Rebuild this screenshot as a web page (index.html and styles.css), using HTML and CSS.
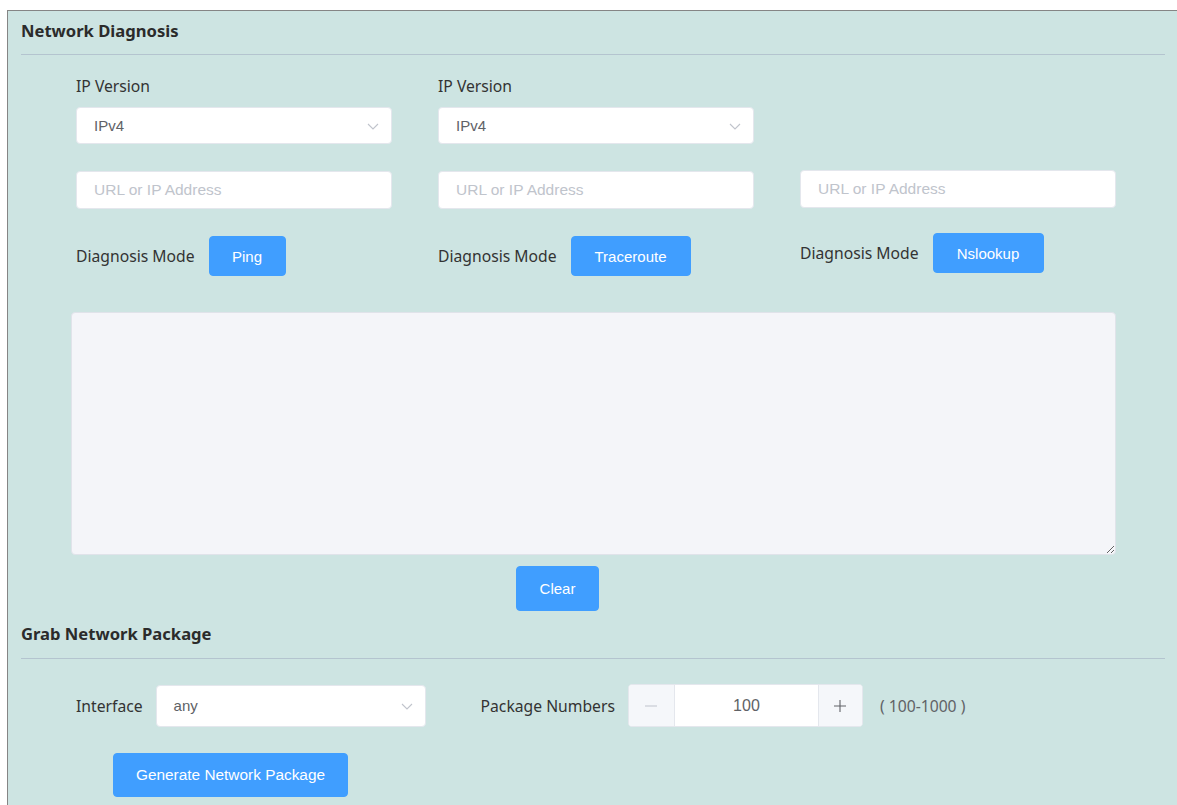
FILE: index.html
```html
<!DOCTYPE html>
<html lang="en">
<head>
<meta charset="utf-8">
<title>Network Diagnosis</title>
<link rel="stylesheet" href="styles.css">
</head>
<body>
<div class="frame">
  <section class="panel">
    <h2 class="panel-title">Network Diagnosis</h2>

    <div class="diag-grid">
      <div class="col">
        <label class="label">IP Version</label>
        <div class="select select-ip">
          <span class="select-value">IPv4</span>
          <svg class="chevron" width="12" height="7" viewBox="0 0 12 7"><polyline points="1,1 6,6 11,1" fill="none" stroke="#c0c4cc" stroke-width="1.1"/></svg>
        </div>
        <input class="text-input" type="text" placeholder="URL or IP Address">
        <div class="mode-row">
          <span class="label">Diagnosis Mode</span>
          <button class="btn btn-ping">Ping</button>
        </div>
      </div>

      <div class="col">
        <label class="label">IP Version</label>
        <div class="select select-ip">
          <span class="select-value">IPv4</span>
          <svg class="chevron" width="12" height="7" viewBox="0 0 12 7"><polyline points="1,1 6,6 11,1" fill="none" stroke="#c0c4cc" stroke-width="1.1"/></svg>
        </div>
        <input class="text-input" type="text" placeholder="URL or IP Address">
        <div class="mode-row">
          <span class="label">Diagnosis Mode</span>
          <button class="btn btn-trace">Traceroute</button>
        </div>
      </div>

      <div class="col col-lookup">
        <input class="text-input" type="text" placeholder="URL or IP Address">
        <div class="mode-row">
          <span class="label">Diagnosis Mode</span>
          <button class="btn btn-lookup">Nslookup</button>
        </div>
      </div>
    </div>

    <textarea class="output"></textarea>
    <button class="btn btn-clear">Clear</button>
  </section>

  <section class="panel">
    <h2 class="panel-title title-grab">Grab Network Package</h2>

    <div class="grab-row">
      <span class="label">Interface</span>
      <div class="select select-iface">
        <span class="select-value">any</span>
        <svg class="chevron" width="12" height="7" viewBox="0 0 12 7"><polyline points="1,1 6,6 11,1" fill="none" stroke="#c0c4cc" stroke-width="1.1"/></svg>
      </div>
      <span class="label label-num">Package Numbers</span>
      <div class="number">
        <span class="num-btn num-minus"><svg width="14" height="14" viewBox="0 0 14 14"><line x1="1" y1="7" x2="13" y2="7" stroke="#c0c4cc" stroke-width="1.1"/></svg></span>
        <span class="num-value">100</span>
        <span class="num-btn num-plus"><svg width="14" height="14" viewBox="0 0 14 14"><line x1="1" y1="7" x2="13" y2="7" stroke="#606266" stroke-width="1.1"/><line x1="7" y1="1" x2="7" y2="13" stroke="#606266" stroke-width="1.1"/></svg></span>
      </div>
      <span class="range">( 100-1000 )</span>
    </div>

    <button class="btn btn-generate">Generate Network Package</button>
  </section>
</div>
</body>
</html>
```

FILE: styles.css
```css
html, body {
  margin: 0;
  padding: 0;
  background: #ffffff;
  overflow: hidden;
  height: 805px;
}

.frame {
  margin: 10px 0 0 7px;
  width: 1200px;
  height: 820px;
  box-sizing: border-box;
  border-left: 1px solid #858585;
  border-top: 1px solid #858585;
  background: #cde4e2;
  padding: 0 0 0 13px;
  font-family: "Liberation Sans", Arial, sans-serif;
}

.panel {
  width: 1144px;
}

.panel-title {
  margin: 0;
  padding: 10px 0 13px;
  font-family: "Noto Sans", "Open Sans", sans-serif;
  font-size: 16.6px;
  line-height: 20px;
  font-weight: 700;
  color: #2b2b2b;
  border-bottom: 1px solid #b4c4cf;
}

.title-grab {
  padding: 13px 0 14px;
}

.label {
  font-family: "Noto Sans", "Open Sans", sans-serif;
  font-size: 15.7px;
  line-height: 20px;
  color: #333333;
  display: block;
}

/* three diagnosis columns */
.diag-grid {
  display: grid;
  grid-template-columns: 316px 316px 316px;
  column-gap: 46px;
  margin: 21px 0 0 55px;
}

.col {
  display: flex;
  flex-direction: column;
}

.col > .label {
  margin-bottom: 11px;
}

.col-lookup {
  padding-top: 68px;
}

.col-lookup .text-input {
  margin-top: 26px;
}

.col-lookup .mode-row {
  margin-top: 25px;
}

.select {
  box-sizing: border-box;
  background: #ffffff;
  border: 1px solid #e4e7ed;
  border-radius: 4px;
  display: flex;
  align-items: center;
  justify-content: space-between;
  padding: 0 12px 0 17px;
  font-size: 15px;
  color: #606266;
}

.select-ip {
  height: 37px;
}

.chevron {
  display: block;
  margin-top: 2px;
}

.text-input {
  box-sizing: border-box;
  height: 38px;
  margin-top: 27px;
  padding: 0 17px;
  background: #ffffff;
  border: 1px solid #e4e7ed;
  border-radius: 4px;
  font-family: "Liberation Sans", Arial, sans-serif;
  font-size: 15.5px;
  color: #606266;
  outline: none;
}

.text-input::placeholder {
  color: #c0c4cc;
}

.mode-row {
  display: flex;
  align-items: center;
  gap: 14px;
  margin-top: 27px;
}

.mode-row .label {
  display: inline;
}

.btn {
  box-sizing: border-box;
  border: 1px solid #409eff;
  background: #409eff;
  color: #ffffff;
  border-radius: 4px;
  font-family: "Liberation Sans", Arial, sans-serif;
  font-size: 15px;
  cursor: pointer;
  padding: 0;
  display: block;
}

.btn-ping {
  width: 77px;
  height: 40px;
}

.btn-trace {
  width: 120px;
  height: 40px;
}

.btn-lookup {
  width: 111px;
  height: 40px;
}

.output {
  display: block;
  box-sizing: border-box;
  margin: 36px 0 0 50px;
  width: 1045px;
  height: 243px;
  background: #f4f5f9;
  border: 1px solid #e0e3ea;
  border-radius: 4px;
  resize: vertical;
  outline: none;
  font-family: "Liberation Sans", Arial, sans-serif;
}

.btn-clear {
  margin: 11px 0 0 495px;
  width: 83px;
  height: 45px;
}

/* packet capture row */
.grab-row {
  display: flex;
  align-items: center;
  margin: 25px 0 0 55px;
}

.grab-row .label {
  display: inline;
}

.select-iface {
  width: 270px;
  height: 42px;
  margin-left: 13px;
  font-size: 15px;
  padding-left: 17px;
}

.label-num {
  margin-left: 55px;
}

.number {
  display: flex;
  margin-left: 13px;
  height: 43px;
  box-sizing: border-box;
  border: 1px solid #e4e7ed;
  border-radius: 4px;
  background: #ffffff;
  overflow: hidden;
}

.num-btn {
  display: flex;
  align-items: center;
  justify-content: center;
  background: #f5f7fa;
}

.num-minus {
  width: 45px;
  border-right: 1px solid #e4e7ed;
}

.num-plus {
  width: 43px;
  border-left: 1px solid #e4e7ed;
}

.num-value {
  width: 143px;
  display: flex;
  align-items: center;
  justify-content: center;
  font-size: 16px;
  color: #606266;
}

.range {
  margin-left: 17px;
  font-family: "Noto Sans", "Open Sans", sans-serif;
  font-size: 15.7px;
  color: #606266;
}

.btn-generate {
  margin: 26px 0 0 92px;
  width: 235px;
  height: 44px;
  font-size: 15.4px;
}
```
